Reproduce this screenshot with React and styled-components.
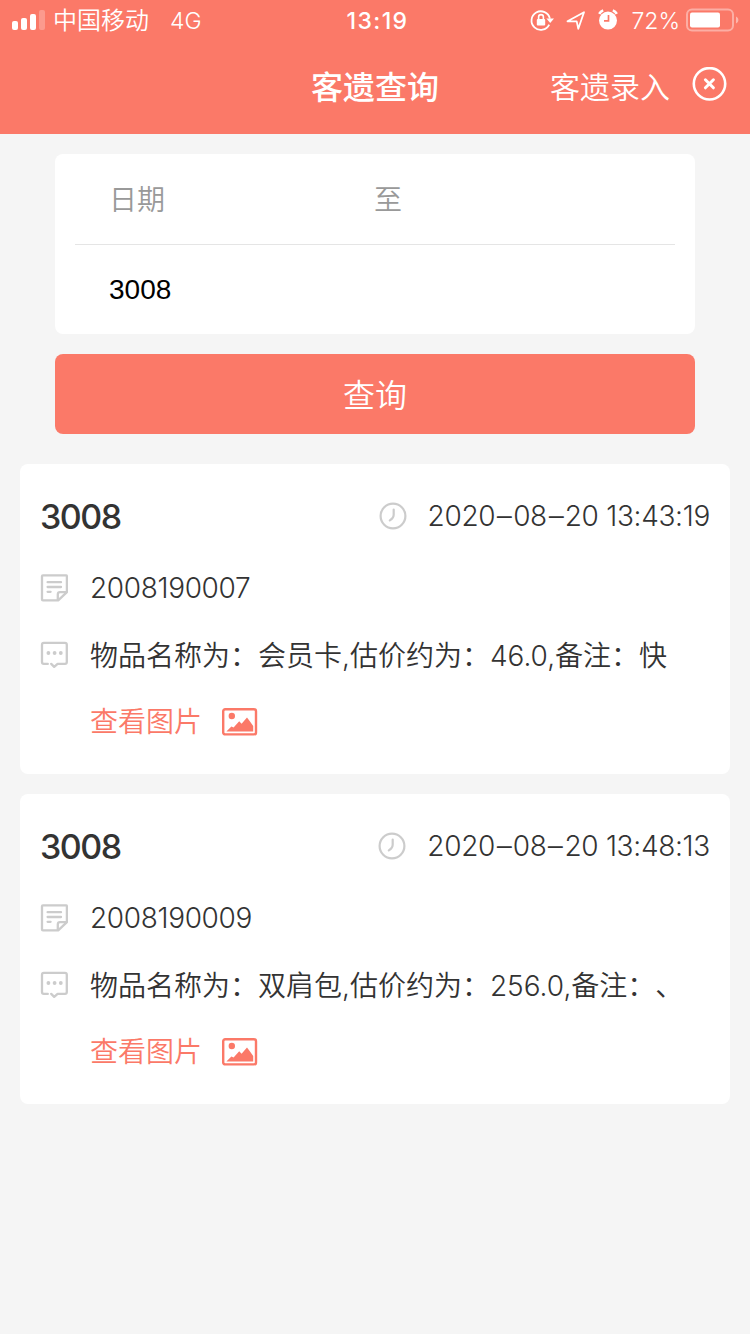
import styled, { createGlobalStyle } from 'styled-components';

const GlobalStyle = createGlobalStyle`
  * {
    box-sizing: border-box;
  }
  body {
    margin: 0;
    background-color: #f5f5f5;
    font-family: Inter, "Noto Sans CJK SC", sans-serif;
    text-spacing-trim: space-all;
    color: #333;
  }
`;

const Page = styled.div`
  width: 750px;
  min-height: 1334px;
  background-color: #f5f5f5;
`;

const Header = styled.header`
  height: 134px;
  background-color: #fb7968;
  color: white;
`;

const StatusBar = styled.div`
  display: grid;
  grid-template-columns: 1fr auto 1fr;
  align-items: center;
  height: 40px;
  padding: 0 11px 0 12px;
  font-size: 23px;
  line-height: 38px;
`;

const StatusLeft = styled.div`
  display: flex;
  align-items: center;
`;

const Carrier = styled.span`
  margin-left: 8px;
  padding-top: 2px;
  font-size: 24px;
  font-weight: 350;
`;

const Network = styled.span`
  margin-left: 21px;
  padding-top: 1px;
  font-weight: 350;
`;

const Clock = styled.span`
  padding: 1px 0 0 4px;
  font-size: 23px;
  font-weight: 550;
  letter-spacing: 1.4px;
`;

const StatusRight = styled.div`
  display: flex;
  align-items: center;
  justify-content: flex-end;
`;

const Percent = styled.span`
  margin: 0 6px 0 11px;
  padding-top: 1px;
  font-weight: 350;
`;

const NavBar = styled.div`
  display: grid;
  grid-template-columns: 1fr auto 1fr;
  align-items: center;
  height: 94px;
  padding-right: 23px;
  padding-left: 23px;
`;

const Title = styled.h1`
  grid-column: 2;
  margin: 2px 0 0;
  font-size: 32px;
  font-weight: 500;
  line-height: 92px;
`;

const NavActions = styled.div`
  display: flex;
  align-items: center;
  justify-content: flex-end;
  gap: 22px;
  font-size: 30px;
  font-weight: 350;
  line-height: 92px;
`;

const CloseIcon = styled.svg`
  margin-bottom: 6px;
`;

const SearchForm = styled.div`
  padding: 20px 55px 30px;
`;

const Fields = styled.div`
  height: 180px;
  padding: 0 20px;
  border-radius: 8px;
  background-color: white;
`;

const DateRow = styled.div`
  display: flex;
  height: 91px;
  padding-left: 34px;
  border-bottom: 1px solid #e5e5e5;
  font-size: 28px;
  font-weight: 350;
  line-height: 93px;
  color: #999;
`;

const DateField = styled.span`
  width: 265px;
`;

const RoomInput = styled.input`
  display: block;
  width: 100%;
  height: 89px;
  padding: 0 34px;
  border: none;
  outline: none;
  background: transparent;
  font-family: "Liberation Sans", sans-serif;
  font-size: 28px;
  color: black;
`;

const SearchButton = styled.button`
  display: block;
  width: 100%;
  height: 80px;
  margin-top: 20px;
  padding: 0 0 2px;
  border: none;
  border-radius: 8px;
  background-color: #fb7968;
  font-family: inherit;
  font-size: 32px;
  font-weight: 350;
  color: white;
  cursor: pointer;
`;

const List = styled.div`
  display: flex;
  flex-direction: column;
  gap: 20px;
  padding: 0 20px;
`;

const Card = styled.div`
  height: 310px;
  padding: 19px 20px 0;
  border-radius: 8px;
  background-color: white;
`;

const CardHead = styled.div`
  display: flex;
  align-items: center;
  justify-content: space-between;
  height: 66px;
`;

const Room = styled.span`
  font-size: 34px;
  font-weight: 550;
  letter-spacing: -1.5px;
`;

const Time = styled.span`
  display: flex;
  align-items: center;
  gap: 21px;
  font-size: 28px;
  font-weight: 350;
  letter-spacing: -0.3px;
  white-space: nowrap;
`;

const Dash = styled.span`
  display: inline-block;
  margin: 0 2.6px 0 2.8px;
  transform: scaleX(1.75);
`;

const Row = styled.div`
  display: flex;
  align-items: center;
  gap: 22px;
  height: 67px;
  margin-top: ${(props) => props.$top || 0}px;
  font-size: 28px;
  font-weight: 350;
  white-space: nowrap;
`;

const Code = styled.span`
  padding-top: 1px;
  letter-spacing: -0.35px;
`;

const Detail = styled.span`
  padding-bottom: 2px;
`;

const PhotoLink = styled.div`
  display: flex;
  align-items: center;
  gap: 20px;
  height: 67px;
  padding: 1px 0 0 50px;
  font-size: 28px;
  font-weight: 350;
  line-height: 69px;
  color: #fb7968;
`;

const records = [
  {
    room: '3008',
    time: '2020-08-20 13:43:19',
    code: '2008190007',
    detail: '物品名称为：会员卡,估价约为：46.0,备注：快',
  },
  {
    room: '3008',
    time: '2020-08-20 13:48:13',
    code: '2008190009',
    detail: '物品名称为：双肩包,估价约为：256.0,备注：、',
  },
];

const SignalIcon = () => (
  <svg width="33" height="20" viewBox="0 0 33 20" fill="#fff">
    <rect x="0" y="11" width="6" height="9" rx="2" />
    <rect x="9" y="8" width="6" height="12" rx="2" />
    <rect x="18" y="4" width="6" height="16" rx="2" />
    <rect x="27" y="0" width="6" height="20" rx="2" opacity="0.25" />
  </svg>
);

const StatusIcons = () => (
  <svg width="90" height="24" viewBox="0 0 90 24" fill="none" stroke="#fff">
    {/* rotation lock */}
    <path d="M19.2 16.6A9.3 9.3 0 1 1 19.9 10.6" strokeWidth="1.8" />
    <path d="M16.4 10.6h7.6l-3.8 4.4z" fill="#fff" stroke="none" />
    <rect x="6.8" y="11" width="8.4" height="6.4" rx="1" fill="#fff" stroke="none" />
    <path d="M8.6 11V9a2.4 2.4 0 0 1 4.8 0v2" strokeWidth="1.6" />
    {/* location arrow */}
    <path d="M37.5 13.3L54 4.3L48.3 20.7L46.7 13.4Z" strokeWidth="1.8" strokeLinejoin="round" />
    {/* alarm */}
    <circle cx="78" cy="12.6" r="9" fill="#fff" stroke="none" />
    <path d="M69.2 5.8q1.4-2.4 4-3.4M86.8 5.8q-1.4-2.4-4-3.4" strokeWidth="2.6" />
    <path d="M78.5 7.1V12.8H74" stroke="#fb7968" strokeWidth="1.7" />
  </svg>
);

const BatteryIcon = () => (
  <svg width="53" height="24" viewBox="0 0 53 24">
    <rect x="1" y="1.5" width="46" height="21" rx="5" fill="none" stroke="#fff" strokeWidth="2" opacity="0.4" />
    <rect x="4" y="4.5" width="30" height="15" rx="2" fill="#fff" />
    <path d="M50 8.6c3.2 1.4 3.2 5.6 0 7z" fill="#fff" opacity="0.45" />
  </svg>
);

const ClockIcon = () => (
  <svg width="28" height="28" viewBox="0 0 28 28" fill="none" stroke="#ccc" strokeLinecap="round">
    <circle cx="14" cy="14" r="12.4" strokeWidth="2.2" />
    <path d="M14.7 7.6V12.5Q14.7 16 10.8 18.4" strokeWidth="2.2" />
  </svg>
);

const NoteIcon = () => (
  <svg width="28" height="28" viewBox="0 0 28 28" fill="none" stroke="#ccc" strokeWidth="2.3" strokeLinejoin="round">
    <path d="M2.9 1.4H26Q26.9 1.4 26.9 2.3V18.2L18.2 26.4H2.9Q2 26.4 2 25.5V2.3Q2 1.4 2.9 1.4Z" />
    <path d="M17.8 26V20.4Q17.8 18.2 20 18.2H26.4" />
    <path d="M7.6 8.2H21M7.6 13H21M7.6 17.8H10.6" strokeLinecap="round" />
  </svg>
);

const MessageIcon = () => (
  <svg width="28" height="28" viewBox="0 0 28 28" fill="none" stroke="#ccc" strokeWidth="2.3" strokeLinecap="round" strokeLinejoin="round">
    <path d="M7.8 22.9H3.8Q2 22.9 2 21.1V3.7Q2 1.9 3.8 1.9H25Q26.8 1.9 26.8 3.7V21.1Q26.8 22.9 25 22.9H17.6L14.2 25.9L11.2 22.9" />
    <g fill="#ccc" stroke="none">
      <circle cx="8.4" cy="12" r="1.9" />
      <circle cx="14.6" cy="12" r="1.9" />
      <circle cx="20.8" cy="12" r="1.9" />
    </g>
  </svg>
);

const PictureIcon = () => (
  <svg width="36" height="28" viewBox="0 0 36 28">
    <rect x="1.2" y="1.2" width="32.8" height="25.2" rx="2" fill="none" stroke="#fb7968" strokeWidth="2.4" />
    <circle cx="9.8" cy="8" r="3.2" fill="#fb7968" />
    <path d="M4.4 23.4L9.4 18.4L11.6 19.6L17.2 13.2L19.6 15.8L25 9.4L28 13.6L31.2 18V23.4Z" fill="#fb7968" />
  </svg>
);

// "2020-08-20 13:43:19" with wide dashes between the date parts
const DateTime = ({ value }) => {
  const [year, month, rest] = value.split('-');
  return (
    <span>
      {year}
      <Dash>-</Dash>
      {month}
      <Dash>-</Dash>
      {rest}
    </span>
  );
};

const App = () => {
  return (
    <Page>
      <GlobalStyle />
      <Header>
        <StatusBar>
          <StatusLeft>
            <SignalIcon />
            <Carrier>中国移动</Carrier>
            <Network>4G</Network>
          </StatusLeft>
          <Clock>13:19</Clock>
          <StatusRight>
            <StatusIcons />
            <Percent>72%</Percent>
            <BatteryIcon />
          </StatusRight>
        </StatusBar>
        <NavBar>
          <Title>客遗查询</Title>
          <NavActions>
            <span>客遗录入</span>
            <CloseIcon width="35" height="35" viewBox="0 0 35 35" fill="none" stroke="#fff" strokeLinecap="round">
              <circle cx="17.5" cy="16.8" r="15.7" strokeWidth="2.6" />
              <path d="M13.4 12.8L21.4 20.8M21.4 12.8L13.4 20.8" strokeWidth="3" />
            </CloseIcon>
          </NavActions>
        </NavBar>
      </Header>
      <SearchForm>
        <Fields>
          <DateRow>
            <DateField>日期</DateField>
            <DateField>至</DateField>
          </DateRow>
          <RoomInput type="text" defaultValue="3008" />
        </Fields>
        <SearchButton type="button">查询</SearchButton>
      </SearchForm>
      <List>
        {records.map((record) => (
          <Card key={record.code}>
            <CardHead>
              <Room>{record.room}</Room>
              <Time>
                <ClockIcon />
                <DateTime value={record.time} />
              </Time>
            </CardHead>
            <Row $top={5}>
              <NoteIcon />
              <Code>{record.code}</Code>
            </Row>
            <Row>
              <MessageIcon />
              <Detail>{record.detail}</Detail>
            </Row>
            <PhotoLink>
              <span>查看图片</span>
              <PictureIcon />
            </PhotoLink>
          </Card>
        ))}
      </List>
    </Page>
  );
};

export default App;
